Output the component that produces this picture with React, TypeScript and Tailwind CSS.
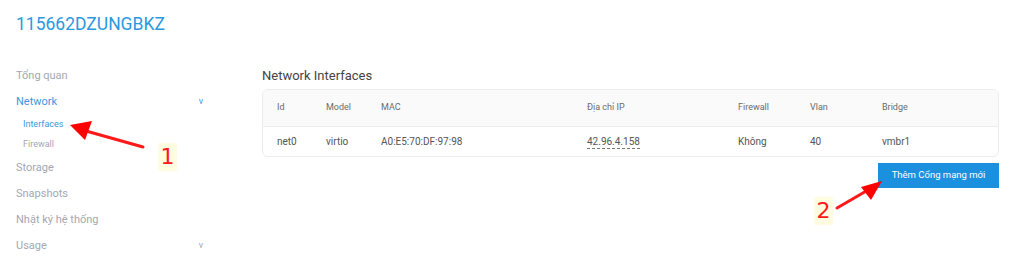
import React from "react";

export default function App() {
  return (
    <div className="relative w-[1024px] h-[262px] overflow-hidden bg-white" style={{ fontFamily: "Roboto, 'Noto Sans', sans-serif" }}>
      <div className="pl-4 pt-[10px] text-[17.5px] leading-[28px] text-[#2b98e0]">115662DZUNGBKZ</div>
      <div className="flex mt-[24px]">
        <div className="w-[262px] shrink-0 pl-4 pr-[58px] text-[11px] pt-[1px]">
          <div className="h-[26px] flex items-center text-[#a3a7b3]">Tổng quan</div>
          <div className="h-[26px] flex items-center justify-between text-[#3b97e3]">
            <span>Network</span>
            <span className="text-[9px] pr-[1px]">v</span>
          </div>
          <div className="pl-[7px] text-[9px]">
            <div className="h-[20px] flex items-center text-[#3b97e3]">Interfaces</div>
            <div className="h-[20px] flex items-center text-[#a3a7b3]">Firewall</div>
          </div>
          <div className="h-[26px] flex items-center text-[#a3a7b3]">Storage</div>
          <div className="h-[26px] flex items-center text-[#a3a7b3]">Snapshots</div>
          <div className="h-[26px] flex items-center text-[#a3a7b3]">Nhật ký hệ thống</div>
          <div className="h-[26px] flex items-center justify-between text-[#a3a7b3]">
            <span>Usage</span>
            <span className="text-[9px] pr-[1px]">v</span>
          </div>
        </div>
        <div className="w-[737px] pt-[4px]">
          <div className="text-[13px] leading-[20px] text-[#444] mb-[3px]">Network Interfaces</div>
          <div className="border border-[#ececec] rounded-[6px] overflow-hidden">
            <div className="grid grid-cols-[49px_55px_206px_151px_72px_72px_1fr] pl-[14px] h-[37px] items-center bg-[#fafafa] border-b border-[#ececec] text-[9px] text-[#6b6b6b]">
              <div>Id</div>
              <div>Model</div>
              <div>MAC</div>
              <div>Địa chỉ IP</div>
              <div>Firewall</div>
              <div>Vlan</div>
              <div>Bridge</div>
            </div>
            <div className="grid grid-cols-[49px_55px_206px_151px_72px_72px_1fr] pl-[14px] h-[29px] items-center text-[10px] text-[#555]">
              <div>net0</div>
              <div>virtio</div>
              <div>A0:E5:70:DF:97:98</div>
              <div><span className="border-b border-dashed border-[#777] pb-[1px]">42.96.4.158</span></div>
              <div>Không</div>
              <div>40</div>
              <div>vmbr1</div>
            </div>
          </div>
          <div className="flex justify-end mt-[6px]">
            <button className="w-[121px] h-[25px] bg-[#1a90de] text-white text-[9.5px]">Thêm Cổng mạng mới</button>
          </div>
        </div>
      </div>

      <svg className="absolute left-0 top-0 pointer-events-none" width="1024" height="262">
        <line x1="143" y1="147" x2="86" y2="131" stroke="#ff1a1a" strokeWidth="3" strokeLinecap="round" />
        <polygon points="70,125 92,121 85,140" fill="#ff0000" />
        <line x1="837" y1="208" x2="868" y2="190" stroke="#ff1a1a" strokeWidth="3" strokeLinecap="round" />
        <polygon points="882,181 861,187 871,200" fill="#ff0000" />
      </svg>
      <div className="absolute left-[158px] top-[143px] w-[19px] h-[28px] bg-[#fffde0] text-[#ff1a1a] text-[22px] leading-[28px] text-center" style={{ fontFamily: "'DejaVu Sans', sans-serif" }}>1</div>
      <div className="absolute left-[814px] top-[197px] w-[19px] h-[28px] bg-[#fffde0] text-[#ff1a1a] text-[22px] leading-[28px] text-center" style={{ fontFamily: "'DejaVu Sans', sans-serif" }}>2</div>
    </div>
  );
}
